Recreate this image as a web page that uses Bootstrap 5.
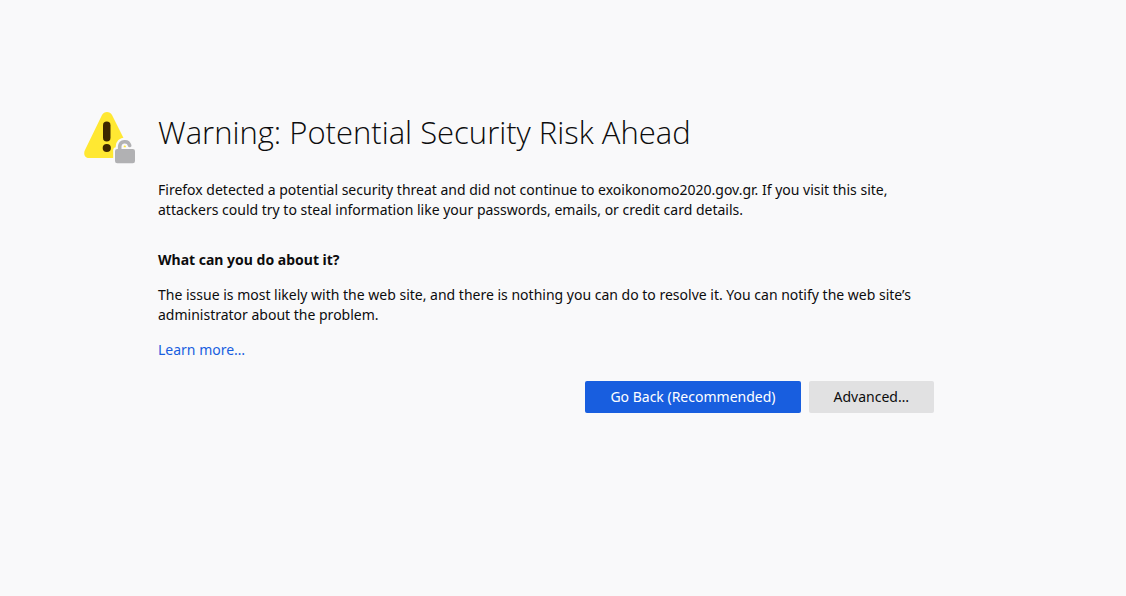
<!DOCTYPE html>
<html lang="en">
<head>
<meta charset="utf-8">
<meta name="viewport" content="width=device-width, initial-scale=1">
<title>Warning: Potential Security Risk Ahead</title>
<link rel="stylesheet" href="https://cdn.jsdelivr.net/npm/bootstrap@5.3.0/dist/css/bootstrap.min.css">
<style>
body { background: #f9f9fa; color: #0c0c0d; font: 14px/20px "Noto Sans", "Open Sans", sans-serif; }
.notice { max-width: 850px; margin-left: 84px; margin-right: 84px; padding-top: 112px; }
.notice-icon { width: 52px; height: 52px; margin-right: 22px; }
.notice h1 { font-family: "Open Sans", sans-serif; font-size: 31px; line-height: 40px; font-weight: 300; margin-bottom: 28px; }
.notice h2 { font-size: 14px; line-height: 20px; font-weight: 700; margin: 30px 0 15px; }
.notice p { margin-bottom: 15px; }
.notice a { color: #185edf; text-decoration: none; }
.notice .btn { --bs-btn-border-radius: 2px; --bs-btn-border-width: 0; --bs-btn-padding-y: 6px; --bs-btn-padding-x: 25px; --bs-btn-font-size: 14px; --bs-btn-line-height: 20px; }
.btn-primary { --bs-btn-bg: #185edf; }
.btn-advanced { --bs-btn-bg: #e1e1e2; --bs-btn-color: #0c0c0d; }
.actions { margin-top: 21px; }
</style>
</head>
<body>
<main class="notice d-flex align-items-start">
<svg class="notice-icon flex-shrink-0" viewBox="0 0 52 52" aria-hidden="true">
<path fill="#ffe832" d="M18 3C20-1 26-1 28 3L46 39C48 43 46 46 42 46H5C1 46-1 42 1 38Z"/>
<rect x="19" y="9.5" width="7.5" height="20" rx="3.75" fill="#3e2800"/>
<circle cx="22.8" cy="36" r="4.1" fill="#3e2800"/>
<path d="M35.7 38V34.5A5.1 5.1 0 0 1 45.9 34.5V38" fill="none" stroke="#f9f9fa" stroke-width="8"/>
<rect x="29.2" y="35.2" width="24" height="18" rx="3" fill="#f9f9fa"/>
<path d="M35.7 38V34.3A5.1 5.1 0 0 1 45.7 33.5" fill="none" stroke="#b1b1b3" stroke-width="3.6" stroke-linecap="round"/>
<rect x="31" y="37" width="20" height="14.3" rx="2.2" fill="#b1b1b3"/>
</svg>
<div class="flex-grow-1">
<h1>Warning: Potential Security Risk Ahead</h1>
<p>Firefox detected a potential security threat and did not continue to exoikonomo2020.gov.gr. If you visit this site, attackers could try to steal information like your passwords, emails, or credit card details.</p>
<h2>What can you do about it?</h2>
<p>The issue is most likely with the web site, and there is nothing you can do to resolve it. You can notify the web site’s administrator about the problem.</p>
<p><a href="#">Learn more…</a></p>
<div class="actions d-flex justify-content-end gap-2">
<button type="button" class="btn btn-primary">Go Back (Recommended)</button>
<button type="button" class="btn btn-advanced">Advanced…</button>
</div>
</div>
</main>
<script src="https://cdn.jsdelivr.net/npm/bootstrap@5.3.0/dist/js/bootstrap.bundle.min.js"></script>
</body>
</html>
